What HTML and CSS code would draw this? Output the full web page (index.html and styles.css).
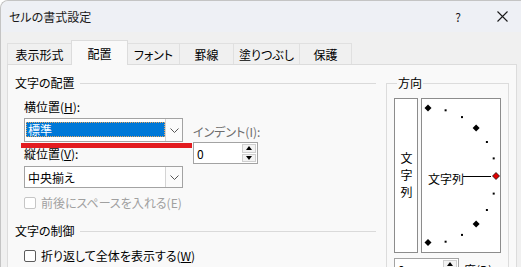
FILE: index.html
```html
<!DOCTYPE html>
<html lang="ja">
<head>
    <meta charset="UTF-8">
    <meta name="viewport" content="width=device-width, initial-scale=1.0">
    <title>セルの書式設定</title>
    <link rel="stylesheet" href="styles.css">
</head>
<body>

    <div class="window">
        <div class="titlebar">
            <span class="title">セルの書式設定</span>
            <span class="help">?</span>
            <svg class="close" width="11" height="11" viewBox="0 0 11 11">
                <path d="M0.5 0.5 L10.5 10.5 M10.5 0.5 L0.5 10.5" stroke="#1a1a1a" stroke-width="1.1" fill="none"/>
            </svg>
        </div>

        <div class="tabs">
            <div class="tab">表示形式</div>
            <div class="tab active">配置</div>
            <div class="tab">フォント</div>
            <div class="tab">罫線</div>
            <div class="tab">塗りつぶし</div>
            <div class="tab">保護</div>
        </div>

        <div class="panel">
            <!-- 左側：文字の配置 / 文字の制御 -->
            <div class="left-col">
                <div class="group-head">文字の配置</div>

                <div class="align-row">
                    <div class="align-fields">
                        <div class="field-label">横位置(<u>H</u>):</div>
                        <div class="select focused">
                            <span class="value"><span class="sel-text">標準</span></span>
                            <span class="drop">
                                <svg width="9" height="5" viewBox="0 0 9 5"><path d="M0.5 0.5 L4.5 4.5 L8.5 0.5" stroke="#555" fill="none"/></svg>
                            </span>
                        </div>
                        <div class="field-label second">縦位置(<u>V</u>):</div>
                        <div class="select short">
                            <span class="value">中央揃え</span>
                            <span class="drop">
                                <svg width="9" height="5" viewBox="0 0 9 5"><path d="M0.5 0.5 L4.5 4.5 L8.5 0.5" stroke="#555" fill="none"/></svg>
                            </span>
                        </div>
                    </div>
                    <div class="indent">
                        <div class="indent-label">インデント(I):</div>
                        <div class="spin">
                            <span class="spin-value">0</span>
                            <span class="spin-btns">
                                <span class="spin-btn"><span class="tri up"></span></span>
                                <span class="spin-btn"><span class="tri down"></span></span>
                            </span>
                        </div>
                    </div>
                </div>

                <div class="check disabled"><span class="box"></span><span>前後にスペースを入れる(E)</span></div>

                <div class="group-head second">文字の制御</div>

                <div class="check last"><span class="box"></span><span>折り返して全体を表示する(<u>W</u>)</span></div>
            </div>

            <!-- 右側：方向 -->
            <div class="right-col">
                <fieldset class="orient">
                    <legend>方向</legend>
                    <div class="orient-boxes">
                        <div class="vtext"><span>文字列</span></div>
                        <div class="dial">
                            <svg width="78" height="153" viewBox="0 0 78 153">
                                <g fill="#000">
                                    <rect x="22.6" y="10.3" width="2" height="2"/>
                                    <rect x="39" y="17.1" width="2" height="2"/>
                                    <rect x="63.9" y="42" width="2" height="2"/>
                                    <rect x="70.7" y="58.4" width="2" height="2"/>
                                    <rect x="70.7" y="93.6" width="2" height="2"/>
                                    <rect x="63.9" y="110" width="2" height="2"/>
                                    <rect x="39" y="134.9" width="2" height="2"/>
                                    <rect x="22.6" y="141.7" width="2" height="2"/>
                                    <polygon points="6,5.5 9.5,9 6,12.5 2.5,9"/>
                                    <polygon points="54.1,25.4 57.6,28.9 54.1,32.4 50.6,28.9"/>
                                    <polygon points="54.1,121.6 57.6,125.1 54.1,128.6 50.6,125.1"/>
                                    <polygon points="6,140 9.5,143.5 6,147 2.5,143.5"/>
                                </g>
                                <text class="dial-text" x="6" y="79" dominant-baseline="central">文字列</text>
                                <line x1="41" y1="77.5" x2="69" y2="77.5" stroke="#000" stroke-width="1"/>
                                <polygon points="74,73.5 77.5,77 74,80.5 70.5,77" fill="#e00000" stroke="#000" stroke-width="0.7"/>
                            </svg>
                        </div>
                    </div>
                    <div class="degree-row">
                        <div class="spin small">
                            <span class="spin-value">0</span>
                            <span class="spin-btns">
                                <span class="spin-btn"><span class="tri up"></span></span>
                                <span class="spin-btn"><span class="tri down"></span></span>
                            </span>
                        </div>
                        <span class="degree-label">度(D)</span>
                    </div>
                </fieldset>
            </div>
        </div>

        <div class="marker"></div>
    </div>

</body>
</html>
```

FILE: styles.css
```css
body {
    margin: 0;
    background: #fff;
    font-family: "Noto Sans CJK JP", "Noto Sans", sans-serif;
    font-size: 12px;
    color: #000;
    font-feature-settings: "palt";
}
.window {
    position: relative;
    width: 521px;
    height: 267px;
    overflow: hidden;
    box-sizing: border-box;
    background: #f0f0f0;
    border-top: 1px solid #c4c4c4;
    border-left: 1px solid #c4c4c4;
    border-top-left-radius: 8px;
}
.titlebar {
    display: flex;
    align-items: center;
    height: 31px;
    padding-left: 8px;
    background: #eef0f5;
    border-top-left-radius: 7px;
    color: #1a1a1a;
}
.title {
    line-height: 16px;
}
.help {
    margin-left: auto;
    margin-right: 36px;
    line-height: 16px;
}
.close {
    margin-right: 13px;
}

/* タブ */
.tabs {
    display: flex;
    align-items: flex-end;
    height: 32px;
    padding-left: 6px;
    box-sizing: border-box;
}
.tab {
    display: flex;
    align-items: center;
    justify-content: center;
    height: 21px;
    box-sizing: border-box;
    margin-left: -1px;
    border: 1px solid #e0e0e0;
    border-bottom: none;
    background: #f0f0f0;
    white-space: nowrap;
}
.tab:first-child { margin-left: 0; width: 65px; }
.tab:nth-child(2) { width: 57px; }
.tab:nth-child(3) { width: 53px; }
.tab:nth-child(4) { width: 55px; }
.tab:nth-child(5) { width: 67px; }
.tab:nth-child(6) { width: 53px; }
.tab.active {
    position: relative;
    z-index: 1;
    height: 25px;
    margin-bottom: -1px;
    background: #f9f9f9;
    border-color: #dcdcdc;
}

/* パネル */
.panel {
    display: flex;
    width: 510px;
    height: 210px;
    margin-left: 6px;
    box-sizing: border-box;
    padding: 10px 0 0 7px;
    border: 1px solid #dcdcdc;
    background: #f9f9f9;
}
.left-col {
    width: 361px;
}
.right-col {
    width: 123px;
    margin-left: 10px;
}
.group-head {
    display: flex;
    align-items: center;
    gap: 5px;
    height: 16px;
    line-height: 16px;
}
.group-head::after {
    content: "";
    flex: 1;
    border-top: 1px solid #dadada;
}
.group-head.second {
    margin-top: 12px;
}

.align-row {
    display: flex;
    margin-top: 8px;
    padding-left: 9px;
}
.align-fields {
    width: 159px;
}
.field-label {
    line-height: 16px;
    height: 16px;
}
.field-label.second {
    margin-top: 4px;
}
.select {
    display: flex;
    height: 24px;
    margin-top: 3px;
    box-sizing: border-box;
    border: 1px solid #a3a3a3;
    background: #fff;
}
.select.short {
    height: 22px;
    margin-top: 4px;
}
.select .value {
    flex: 1;
    display: flex;
    align-items: center;
    padding-left: 3px;
    white-space: nowrap;
}
.select.focused .value {
    padding: 0;
    margin: 3px 0 4px 1px;
    background: #0078d7;
    color: #fff;
    outline: 1px dotted #e9a860;
    outline-offset: -1px;
}
.sel-text {
    padding-left: 2px;
}
.drop {
    display: flex;
    align-items: center;
    justify-content: center;
    width: 16px;
    border-left: 1px solid #d4d4d4;
    background: #fbfbfb;
}

.indent {
    margin-left: 10px;
    margin-top: 25px;
}
.indent-label {
    line-height: 16px;
    color: #6d6d6d;
}
.spin {
    display: flex;
    width: 65px;
    height: 22px;
    margin-top: 2px;
    box-sizing: border-box;
    border: 1px solid #a3a3a3;
    background: #fff;
}
.spin-value {
    flex: 1;
    display: flex;
    align-items: center;
    padding-left: 3px;
}
.spin-btns {
    display: flex;
    flex-direction: column;
    gap: 1px;
    width: 14px;
    margin: 1px 1px 1px 0;
}
.spin-btn {
    flex: 1;
    display: flex;
    align-items: center;
    justify-content: center;
    border: 1px solid #cfcfcf;
    background: #f3f3f3;
}
.tri {
    width: 0;
    height: 0;
    border-left: 3px solid transparent;
    border-right: 3px solid transparent;
}
.tri.up { border-bottom: 4px solid #000; }
.tri.down { border-top: 4px solid #000; }

.check {
    display: flex;
    align-items: center;
    gap: 5px;
    height: 16px;
    line-height: 16px;
    margin-top: 7px;
    padding-left: 9px;
}
.check .box {
    width: 12px;
    height: 12px;
    box-sizing: border-box;
    border: 1px solid #5c5c5c;
    border-radius: 2px;
    background: #fff;
}
.check.disabled {
    color: #a0a0a0;
}
.check.disabled .box {
    border-color: #c6c6c6;
}
.check.last {
    margin-top: 9px;
}

/* 方向 */
.orient {
    margin: 0;
    min-width: 0;
    padding: 7px 7px 0;
    border: 1px solid #dcdcdc;
}
.orient legend {
    margin-left: 3px;
    padding: 0 1px;
    line-height: 16px;
}
.orient-boxes {
    display: flex;
    gap: 3px;
}
.vtext, .dial {
    height: 155px;
    box-sizing: border-box;
    border: 1px solid #8c8c8c;
    background: #fff;
}
.vtext {
    display: flex;
    align-items: center;
    justify-content: center;
    width: 24px;
    padding-top: 4px;
}
.vtext span {
    writing-mode: vertical-rl;
    letter-spacing: 5px;
    line-height: 12px;
}
.dial {
    width: 80px;
}
.dial svg {
    display: block;
}
.dial-text {
    font-family: "Noto Sans CJK JP", sans-serif;
    font-size: 12px;
}
.degree-row {
    display: flex;
    align-items: center;
    gap: 5px;
    margin-top: 5px;
}
.degree-row .spin {
    margin-top: 0;
}

.marker {
    position: absolute;
    left: 20px;
    top: 142px;
    width: 171px;
    height: 5px;
    background: #e31b1f;
}
```
